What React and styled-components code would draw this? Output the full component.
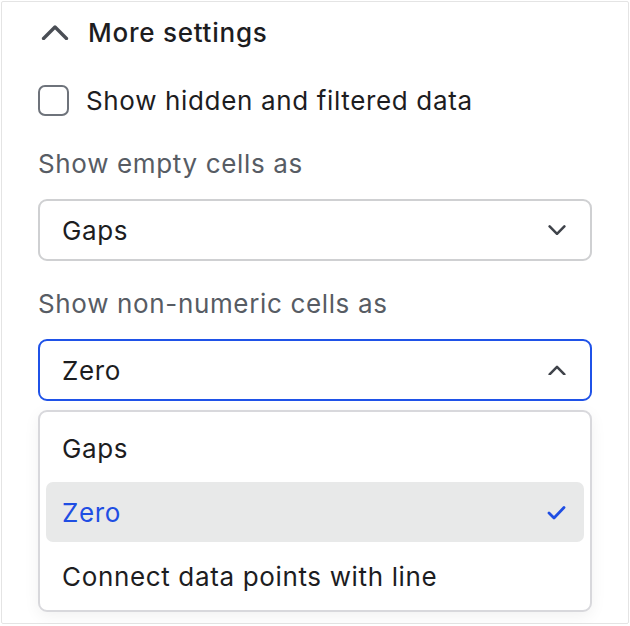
import React from 'react'
import styled, { createGlobalStyle } from 'styled-components'

const GlobalStyle = createGlobalStyle`
  html, body {
    margin: 0;
    padding: 0;
    background: #ffffff;
  }
  body {
    font-family: Inter, "Noto Sans", "Liberation Sans", sans-serif;
    -webkit-font-smoothing: antialiased;
  }
`

const Panel = styled.div`
  box-sizing: border-box;
  margin: 1px 0 0 1px;
  width: 628px;
  height: 623px;
  border: 1px solid #e4e4e4;
  border-radius: 2px;
  background: #fff;
  padding: 0 36px;
  display: flex;
  flex-direction: column;
  font-size: 26px;
  letter-spacing: 0.65px;
`

const Header = styled.div`
  height: 60px;
  display: flex;
  align-items: center;
  gap: 19px;
  padding-left: 3px;
  color: #1d1d1f;
  font-weight: 500;
  letter-spacing: 0.75px;
`

const CheckRow = styled.label`
  margin-top: 8px;
  height: 60px;
  display: flex;
  align-items: center;
  gap: 17px;
  color: #1d1d1f;
`

const Box = styled.span`
  box-sizing: border-box;
  width: 31px;
  height: 31px;
  border: 2px solid #6e737b;
  border-radius: 7px;
  flex-shrink: 0;
`

const Label = styled.div`
  margin-top: ${p => p.$top}px;
  height: 36px;
  display: flex;
  align-items: center;
  color: #575c64;
`

const Field = styled.div`
  position: relative;
  margin-top: 18px;
`

const Select = styled.div`
  box-sizing: border-box;
  height: 62px;
  border: ${p => (p.$open ? '2px solid #1f52e8' : '2px solid #cfd0d2')};
  border-radius: 9px;
  display: flex;
  align-items: center;
  justify-content: space-between;
  padding: 0 24px 0 22px;
  color: #1d1d1f;
`

const Menu = styled.div`
  position: absolute;
  left: 0;
  right: 0;
  top: calc(100% + 9px);
  box-sizing: border-box;
  height: 202px;
  background: #fff;
  border: 2px solid #d8d8dc;
  border-radius: 9px;
  box-shadow: 0 4px 16px rgba(0, 0, 0, 0.06);
  padding: 6px 6px;
  display: flex;
  flex-direction: column;
  gap: 4px;
`

const Option = styled.div`
  height: 60px;
  flex-shrink: 0;
  border-radius: 7px;
  display: flex;
  align-items: center;
  justify-content: space-between;
  padding: 0 18px 0 16px;
  background: ${p => (p.$selected ? '#e8e9e9' : 'transparent')};
  color: ${p => (p.$selected ? '#1f4ee3' : '#1d1d1f')};
`

const Chevron = ({ up, color = '#3f434a', w = 18, stroke = 2.6 }) => (
  <svg width={w} height={w * 0.6} viewBox="0 0 18 11" fill="none">
    <path
      d={up ? 'M1.5 9.5 L9 2 L16.5 9.5' : 'M1.5 1.5 L9 9 L16.5 1.5'}
      stroke={color}
      strokeWidth={stroke}
      strokeLinecap="round"
      strokeLinejoin="round"
    />
  </svg>
)

const Check = () => (
  <svg width="19" height="15" viewBox="0 0 19 15" fill="none">
    <path
      d="M2 8 L7 13 L17 2.5"
      stroke="#1f4ee3"
      strokeWidth="2.8"
      strokeLinecap="round"
      strokeLinejoin="round"
    />
  </svg>
)

const options = ['Gaps', 'Zero', 'Connect data points with line']

export default function App() {
  return (
    <>
      <GlobalStyle />
      <Panel>
        <Header>
          <Chevron up w={28} color="#4a4e55" stroke={2.2} />
          More settings
        </Header>
        <CheckRow>
          <Box />
          Show hidden and filtered data
        </CheckRow>
        <Label $top={15}>Show empty cells as</Label>
        <Field>
          <Select>
            Gaps
            <Chevron />
          </Select>
        </Field>
        <Label $top={24}>Show non-numeric cells as</Label>
        <Field>
          <Select $open>
            Zero
            <Chevron up />
          </Select>
          <Menu>
            {options.map(o => (
              <Option key={o} $selected={o === 'Zero'}>
                {o}
                {o === 'Zero' && <Check />}
              </Option>
            ))}
          </Menu>
        </Field>
      </Panel>
    </>
  )
}
